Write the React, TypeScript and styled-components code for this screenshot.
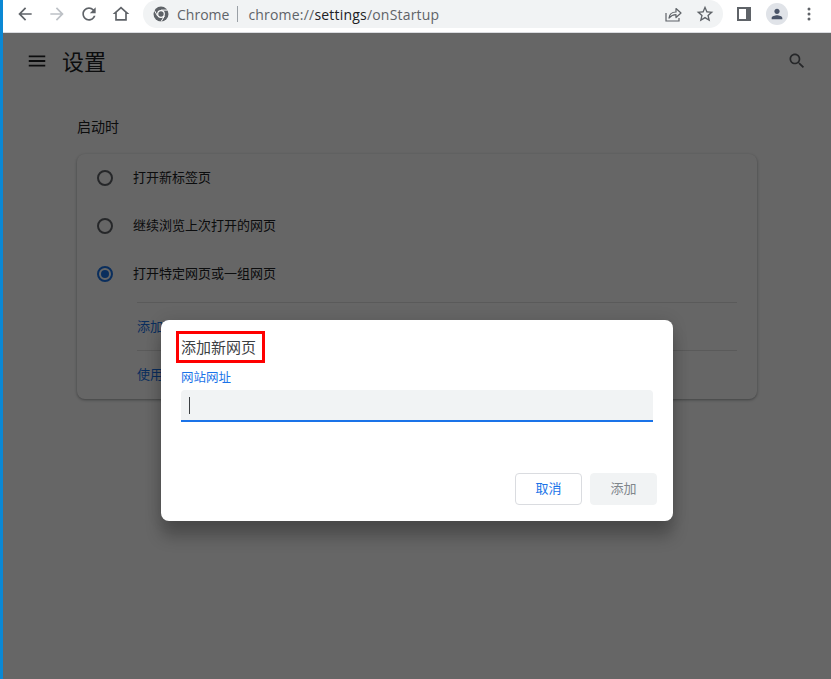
import React from "react";
import styled, { createGlobalStyle } from "styled-components";

const GlobalStyle = createGlobalStyle`
  html, body {
    margin: 0;
    padding: 0;
    background: #fff;
  }
  * {
    box-sizing: border-box;
  }
`;

const CJK = `"Noto Sans CJK SC", "Noto Sans", sans-serif`;

const Window = styled.div`
  display: flex;
  width: 831px;
  height: 679px;
  overflow: hidden;
  font-family: ${CJK};
`;

const DesktopEdge = styled.div`
  flex: none;
  width: 3px;
  background: #0a88d4;
`;

const Browser = styled.div`
  flex: 1;
  display: flex;
  flex-direction: column;
  min-width: 0;
`;

const Toolbar = styled.div`
  flex: none;
  display: flex;
  align-items: flex-start;
  height: 33px;
  padding-left: 6px;
  background: #fff;
  border-bottom: 1px solid #dadce0;
`;

const NavButton = styled.div`
  flex: none;
  display: flex;
  align-items: center;
  justify-content: center;
  width: 32px;
  height: 28px;
`;

const Omnibox = styled.div`
  flex: none;
  display: flex;
  align-items: center;
  width: 580px;
  height: 28px;
  margin-left: 6px;
  padding: 0 2px 0 10px;
  border-radius: 14px;
  background: #f1f3f4;
  font-family: "Open Sans", "Noto Sans", sans-serif;
  font-size: 14px;
`;

const SiteName = styled.span`
  margin-left: 8px;
  color: #5f6368;
`;

const Separator = styled.span`
  width: 1px;
  height: 16px;
  margin: 0 10px 0 8px;
  background: #9aa0a6;
`;

const Url = styled.span`
  flex: 1;
  color: #5f6368;
  letter-spacing: 0.2px;
  white-space: nowrap;
`;

const UrlPath = styled.span`
  color: #202124;
`;

const PanelButton = styled(NavButton)`
  margin-left: 5px;
`;

const ProfileButton = styled(NavButton)`
  margin-left: 1px;
`;

const Avatar = styled.div`
  display: flex;
  align-items: center;
  justify-content: center;
  width: 22px;
  height: 22px;
  border-radius: 50%;
  background: #e0e3e8;
`;

const Page = styled.div`
  position: relative;
  flex: 1;
  background: #fff;
`;

const PageHeader = styled.div`
  display: flex;
  align-items: center;
  height: 56px;
  padding: 0 24px 0 23px;
`;

const PageTitle = styled.h1`
  flex: 1;
  margin: 0 0 2px 14px;
  font-size: 22px;
  font-weight: 400;
  color: #202124;
`;

const Content = styled.div`
  padding: 19px 74px 0;
`;

const SectionTitle = styled.h2`
  margin: 0 0 10px;
  font-size: 14px;
  line-height: 36px;
  font-weight: 400;
  color: #202124;
`;

const Card = styled.div`
  width: 680px;
  border-radius: 8px;
  background: #fff;
  box-shadow: 0 1px 2px rgba(60, 64, 67, 0.3), 0 1px 3px 1px rgba(60, 64, 67, 0.15);
  padding-bottom: 1px;
`;

const RadioRow = styled.div`
  display: flex;
  align-items: center;
  height: 48px;
  padding-left: 20px;
  font-size: 13px;
  color: #202124;
`;

const RowLabel = styled.span`
  margin-bottom: 3px;
`;

const Radio = styled.span<{ $checked?: boolean }>`
  flex: none;
  display: flex;
  align-items: center;
  justify-content: center;
  width: 16px;
  height: 16px;
  margin-right: 20px;
  border-radius: 50%;
  border: 2px solid ${(p) => (p.$checked ? "#1a73e8" : "#5f6368")};

  &::after {
    content: "";
    display: ${(p) => (p.$checked ? "block" : "none")};
    width: 8px;
    height: 8px;
    border-radius: 50%;
    background: #1a73e8;
  }
`;

const LinkRow = styled.div<{ $first?: boolean }>`
  display: flex;
  align-items: center;
  height: 48px;
  margin: ${(p) => (p.$first ? "4px" : "0")} 20px 0 60px;
  padding-bottom: 3px;
  border-top: 1px solid #e0e0e0;
  font-size: 13px;
  color: #1a73e8;
`;

const Scrim = styled.div`
  position: absolute;
  inset: 0;
  display: flex;
  justify-content: center;
  padding-top: 287px;
  background: rgba(0, 0, 0, 0.6);
`;

const Dialog = styled.div`
  display: flex;
  flex-direction: column;
  width: 512px;
  height: 201px;
  padding: 11px 16px 16px 15px;
  border-radius: 8px;
  background: #fff;
  box-shadow: 0 0 16px rgba(0, 0, 0, 0.12), 0 16px 16px rgba(0, 0, 0, 0.24);
`;

const DialogTitle = styled.div`
  align-self: flex-start;
  width: 89px;
  height: 32px;
  padding-left: 2px;
  border: 3px solid #f00;
  font-size: 15px;
  line-height: 25px;
  color: #3c4043;
`;

const FieldLabel = styled.div`
  margin: 6px 0 0 5px;
  font-size: 12.5px;
  line-height: 16px;
  color: #1a73e8;
`;

const Field = styled.div`
  display: flex;
  align-items: center;
  width: 472px;
  height: 32px;
  margin: 5px 0 0 5px;
  padding-left: 8px;
  border-bottom: 2px solid #1a73e8;
  border-radius: 4px 4px 0 0;
  background: #f1f3f4;
`;

const Caret = styled.span`
  width: 1px;
  height: 17px;
  background: #3c4043;
`;

const Actions = styled.div`
  display: flex;
  justify-content: flex-end;
  gap: 8px;
  margin-top: auto;
`;

const Button = styled.div<{ $disabled?: boolean }>`
  display: flex;
  align-items: center;
  justify-content: center;
  width: 67px;
  height: 32px;
  padding-bottom: 3px;
  border-radius: 4px;
  border: 1px solid ${(p) => (p.$disabled ? "#f1f3f4" : "#dadce0")};
  background: ${(p) => (p.$disabled ? "#f1f3f4" : "#fff")};
  color: ${(p) => (p.$disabled ? "#80868b" : "#1a73e8")};
  font-size: 13px;
`;

const Icon = ({
  d,
  size = 20,
  color = "#5f6368",
}: {
  d: string;
  size?: number;
  color?: string;
}) => (
  <svg width={size} height={size} viewBox="0 0 24 24" fill={color}>
    <path d={d} />
  </svg>
);

const ChromeLogo = () => (
  <svg width="16" height="16" viewBox="0 0 16 16">
    <circle cx="8" cy="8" r="7.5" fill="#5f6368" />
    <circle cx="8" cy="8" r="3.9" fill="#fff" />
    <circle cx="8" cy="8" r="2.7" fill="#5f6368" />
    <path d="M8 4.1h6.6M4.6 10 1.4 4.4M11.4 10l-3.3 5.6" stroke="#fff" strokeWidth="1" />
  </svg>
);

const ShareIcon = () => (
  <svg width="18" height="18" viewBox="0 0 18 18" fill="none" stroke="#5f6368" strokeWidth="1.2">
    <path d="M2 8v8h13v-3" />
    <path d="M5 13c.5-4 3-6 7-6V3.500l5 4.500-5 4.500V9.700c-3 0-5 1-7 3.300z" strokeLinejoin="round" />
  </svg>
);

const SidePanelIcon = () => (
  <svg width="14" height="14" viewBox="0 0 14 14">
    <rect width="14" height="14" fill="#5f6368" />
    <rect x="2" y="2" width="7" height="10" fill="#fff" />
  </svg>
);

const MenuDots = () => (
  <svg width="4" height="14" viewBox="0 0 4 14" fill="#5f6368">
    <circle cx="2" cy="2" r="1.500" />
    <circle cx="2" cy="7" r="1.500" />
    <circle cx="2" cy="12" r="1.500" />
  </svg>
);

const paths = {
  back: "M20 11H7.830l5.590-5.590L12 4l-8 8 8 8 1.410-1.410L7.830 13H20v-2z",
  forward: "M12 4l-1.410 1.410L16.170 11H4v2h12.170l-5.580 5.590L12 20l8-8z",
  reload:
    "M17.650 6.350C16.200 4.900 14.210 4 12 4c-4.420 0-7.990 3.580-7.990 8s3.570 8 7.990 8c3.730 0 6.840-2.550 7.730-6h-2.080c-.820 2.330-3.040 4-5.650 4-3.310 0-6-2.690-6-6s2.690-6 6-6c1.660 0 3.140.690 4.220 1.780L13 11h7V4l-2.350 2.350z",
  home: "M12 5.690l5 4.500V18H7v-7.810l5-4.500M12 3L2 12h3v8h14v-8h3L12 3z",
  star: "M22 9.240l-7.190-.620L12 2 9.190 8.630 2 9.240l5.460 4.730L5.820 21 12 17.270 18.180 21l-1.630-7.030L22 9.240zM12 15.400l-3.760 2.270 1-4.280-3.320-2.880 4.380-.380L12 6.100l1.710 4.040 4.380.380-3.320 2.880 1 4.280L12 15.400z",
  search:
    "M15.500 14h-.790l-.280-.270C15.410 12.590 16 11.110 16 9.500 16 5.910 13.090 3 9.500 3S3 5.910 3 9.500 5.910 16 9.500 16c1.610 0 3.090-.590 4.230-1.570l.270.280v.790l5 4.990L20.490 19l-4.990-5zm-6 0C7.010 14 5 11.990 5 9.500S7.010 5 9.500 5 14 7.010 14 9.500 11.990 14 9.500 14z",
  menu: "M3 18h18v-2H3v2zm0-5h18v-2H3v2zm0-7v2h18V6H3z",
  person:
    "M12 12c2.210 0 4-1.790 4-4s-1.790-4-4-4-4 1.790-4 4 1.790 4 4 4zm0 2c-2.670 0-8 1.340-8 4v2h16v-2c0-2.660-5.330-4-8-4z",
};

const App = () => (
  <>
    <GlobalStyle />
    <Window>
      <DesktopEdge />
      <Browser>
        <Toolbar>
          <NavButton>
            <Icon d={paths.back} />
          </NavButton>
          <NavButton>
            <Icon d={paths.forward} color="#bdc1c6" />
          </NavButton>
          <NavButton>
            <Icon d={paths.reload} />
          </NavButton>
          <NavButton>
            <Icon d={paths.home} />
          </NavButton>
          <Omnibox>
            <ChromeLogo />
            <SiteName>Chrome</SiteName>
            <Separator />
            <Url>
              chrome://<UrlPath>settings</UrlPath>/onStartup
            </Url>
            <NavButton>
              <ShareIcon />
            </NavButton>
            <NavButton>
              <Icon d={paths.star} />
            </NavButton>
          </Omnibox>
          <PanelButton>
            <SidePanelIcon />
          </PanelButton>
          <ProfileButton>
            <Avatar>
              <Icon d={paths.person} size={16} color="#4a5468" />
            </Avatar>
          </ProfileButton>
          <NavButton>
            <MenuDots />
          </NavButton>
        </Toolbar>
        <Page>
          <PageHeader>
            <Icon d={paths.menu} size={22} color="#202124" />
            <PageTitle>设置</PageTitle>
            <Icon d={paths.search} size={20} color="#5f6368" />
          </PageHeader>
          <Content>
            <SectionTitle>启动时</SectionTitle>
            <Card>
              <RadioRow>
                <Radio />
                <RowLabel>打开新标签页</RowLabel>
              </RadioRow>
              <RadioRow>
                <Radio />
                <RowLabel>继续浏览上次打开的网页</RowLabel>
              </RadioRow>
              <RadioRow>
                <Radio $checked />
                <RowLabel>打开特定网页或一组网页</RowLabel>
              </RadioRow>
              <LinkRow $first>添加新网页</LinkRow>
              <LinkRow>使用当前网页</LinkRow>
            </Card>
          </Content>
          <Scrim>
            <Dialog>
              <DialogTitle>添加新网页</DialogTitle>
              <FieldLabel>网站网址</FieldLabel>
              <Field>
                <Caret />
              </Field>
              <Actions>
                <Button>取消</Button>
                <Button $disabled>添加</Button>
              </Actions>
            </Dialog>
          </Scrim>
        </Page>
      </Browser>
    </Window>
  </>
);

export default App;
